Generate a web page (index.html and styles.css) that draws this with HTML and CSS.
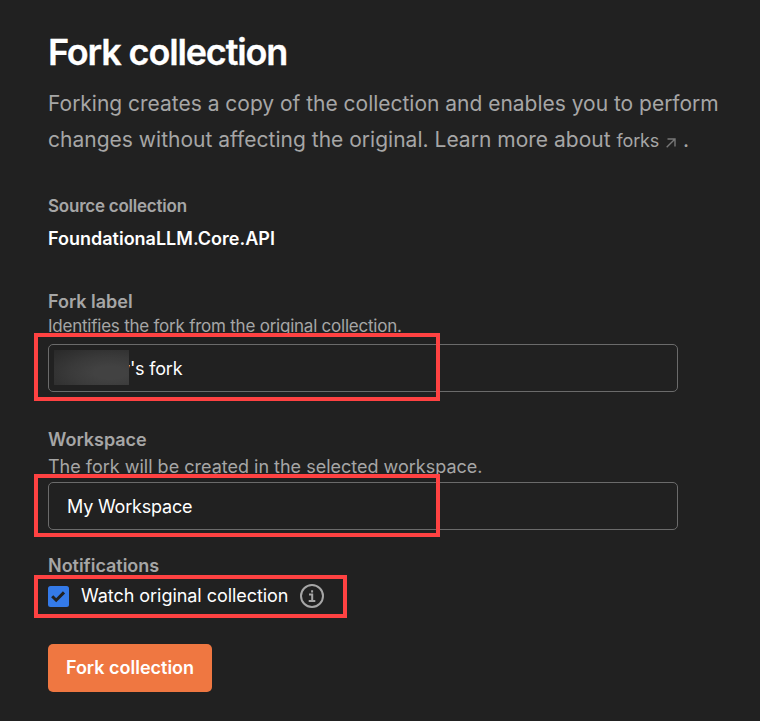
FILE: index.html
```html
<!DOCTYPE html>
<html lang="en">
<head>
<meta charset="utf-8">
<title>Fork collection</title>
<link rel="stylesheet" href="styles.css">
</head>
<body>
<main class="page">
  <h1 class="title">Fork collection</h1>
  <p class="intro"><span class="line one">Forking creates a copy of the collection and enables you to perform</span><span class="line two">changes without affecting the original. Learn more about <a class="link">forks <svg class="arrow" viewBox="0 0 10 10"><path d="M.7 9.3 9 1M1.5 1H9V8.5"/></svg></a> .</span></p>
  <div class="label source">Source collection</div>
  <div class="name">FoundationaLLM.Core.API</div>
  <div class="label fork">Fork label</div>
  <div class="hint hint1">Identifies the fork from the original collection.</div>
  <div class="field"><span class="value">y's fork</span><span class="blur"></span><span class="mark m1"></span></div>
  <div class="label workspace">Workspace</div>
  <div class="hint hint2">The fork will be created in the selected workspace.</div>
  <div class="field second"><span class="value">My Workspace</span><span class="mark m2"></span></div>
  <div class="label notif">Notifications</div>
  <div class="watch">
    <svg class="check" viewBox="0 0 21 21"><rect width="21" height="21" rx="2.5" fill="#347ae8"/><path d="M4.2 10.2 8.2 14.2 16 6.4" fill="none" stroke="#212121" stroke-width="3"/></svg>
    <span class="watchtext">Watch original collection</span>
    <svg class="info" viewBox="0 0 24 24"><circle cx="12" cy="12" r="11"/><path d="M9 10.6h3.2V17M8.7 17h6.6M12.1 6.2v2.2"/></svg>
    <span class="mark m3"></span>
  </div>
  <button class="button">Fork collection</button>
</main>
</body>
</html>
```
FILE: styles.css
```css
*{box-sizing:border-box}
body{margin:0;background:#212121;color:#fff;font-family:Inter,sans-serif;font-size:18px}
.page{height:721px;padding:32px 48px 0;overflow:hidden;display:flex;flex-direction:column;align-items:flex-start;white-space:nowrap}
.title{margin:0;font-size:36px;line-height:40px;font-weight:600;letter-spacing:-1.15px;-webkit-text-stroke:.3px #fff}
.intro{margin:14px 0 0;font-size:21px;line-height:36px;color:#a6a6a6}
.one{letter-spacing:-.015px}
.two{letter-spacing:.015px}
.link{font-size:18px;letter-spacing:-.15px}
.line{display:block}
.arrow{width:10px;height:10px;margin:0 1px 0 2px;fill:none;stroke:#777;stroke-width:1.4;vertical-align:-1px}
.label{font-size:18px;line-height:24px;font-weight:600;color:#a6a6a6;letter-spacing:-.02px}
.source{margin-top:35px;font-size:17px;letter-spacing:-.23px}
.name{margin-top:9px;line-height:24px;font-weight:600}
.fork{margin-top:39px}
.hint{font-size:18px;line-height:24px;color:#a6a6a6}
.hint1{font-size:17px;letter-spacing:-.23px}
.field{position:relative;width:630px;height:48px;border:1px solid #6b6b6b;border-radius:5px;padding-left:71px;line-height:48px;margin-top:6px;letter-spacing:-.2px}
.blur{position:absolute;left:5px;top:5px;width:75px;height:35px;background:radial-gradient(ellipse at 75% 65%,#424242 20%,#3a3a3a 50%,#292929 100%)}
.workspace{margin-top:36px}
.hint2{margin-top:3px}
.second{margin-top:3px;padding-left:18px}
.notif{margin-top:24px}
.watch{position:relative;display:flex;align-items:center;height:36px}
.check{width:21px;height:21px}
.watchtext{margin:-2px 0 0 12px;letter-spacing:-.05px}
.info{width:24px;height:24px;margin-left:12px;fill:none;stroke:#a6a6a6;stroke-width:2}
.mark{position:absolute;border:4px solid #ff4242}
.m1{left:-15px;top:-12px;width:406px;height:68px}
.m2{left:-15px;top:-9px;width:406px;height:63px}
.m3{left:-14px;top:-3px;width:313px;height:43px}
.button{margin-top:30px;width:164px;height:48px;border:0;border-radius:5px;background:#ef7741;color:#fff;font:600 18px Inter,sans-serif;padding:0 0 2px}
```
